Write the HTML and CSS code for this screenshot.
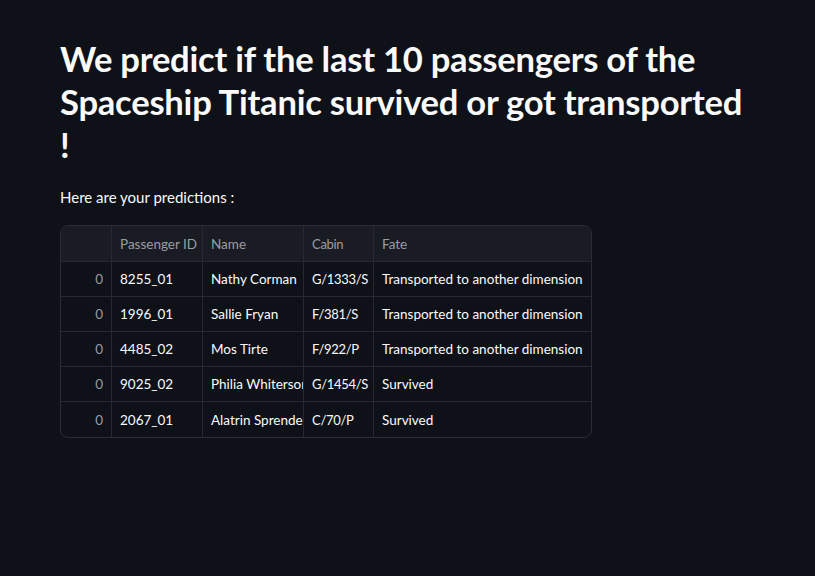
FILE: index.html
```html
<!DOCTYPE html>
<html>
<head>
<meta charset="utf-8">
<link rel="stylesheet" href="styles.css">
</head>
<body>
<main class="page">
  <h1 class="title">We predict if the last 10 passengers of the Spaceship Titanic survived or got transported !</h1>
  <p class="lead">Here are your predictions :</p>
  <div class="grid">
    <div class="row head">
      <div class="c idx"></div>
      <div class="c pid">Passenger ID</div>
      <div class="c name">Name</div>
      <div class="c cabin">Cabin</div>
      <div class="c fate">Fate</div>
    </div>
    <div class="row">
      <div class="c idx">0</div>
      <div class="c pid">8255_01</div>
      <div class="c name">Nathy Corman</div>
      <div class="c cabin">G/1333/S</div>
      <div class="c fate">Transported to another dimension</div>
    </div>
    <div class="row">
      <div class="c idx">0</div>
      <div class="c pid">1996_01</div>
      <div class="c name">Sallie Fryan</div>
      <div class="c cabin">F/381/S</div>
      <div class="c fate">Transported to another dimension</div>
    </div>
    <div class="row">
      <div class="c idx">0</div>
      <div class="c pid">4485_02</div>
      <div class="c name">Mos Tirte</div>
      <div class="c cabin">F/922/P</div>
      <div class="c fate">Transported to another dimension</div>
    </div>
    <div class="row">
      <div class="c idx">0</div>
      <div class="c pid">9025_02</div>
      <div class="c name">Philia Whiterson</div>
      <div class="c cabin">G/1454/S</div>
      <div class="c fate">Survived</div>
    </div>
    <div class="row last">
      <div class="c idx">0</div>
      <div class="c pid">2067_01</div>
      <div class="c name">Alatrin Sprender</div>
      <div class="c cabin">C/70/P</div>
      <div class="c fate">Survived</div>
    </div>
  </div>
</main>
</body>
</html>
```

FILE: styles.css
```css
html, body {
  margin: 0;
  padding: 0;
  background: #0e1117;
  color: #fafafa;
  font-family: "Lato", "Liberation Sans", sans-serif;
}
.page {
  padding: 37px 60px 0 60px;
}
.title {
  margin: 0;
  font-size: 34.6px;
  line-height: 43px;
  font-weight: 700;
  letter-spacing: -0.25px;
  max-width: 700px;
}
.lead {
  margin: 19px 0 0 0;
  font-size: 15px;
  line-height: 24px;
}
.grid {
  margin-top: 16px;
  width: 530px;
  border: 1px solid #2a2d35;
  border-radius: 8px;
  overflow: hidden;
  font-size: 13.5px;
}
.row {
  display: flex;
  height: 35px;
  box-sizing: border-box;
  border-bottom: 1px solid #262930;
}
.row.head {
  height: 36px;
  background: #1a1c24;
  color: #9a9ca5;
}
.row.last {
  border-bottom: none;
  height: 35px;
}
.c {
  display: flex;
  align-items: center;
  padding: 0 8px;
  box-sizing: border-box;
  white-space: nowrap;
  overflow: hidden;
  border-right: 1px solid #262930;
}
.c.fate { border-right: none; flex: 1; }
.idx { width: 51px; justify-content: flex-end; color: #9a9ca5; }
.pid { width: 91px; }
.name { width: 101px; }
.cabin { width: 70px; font-size: 13px; letter-spacing: -0.3px; }
```
